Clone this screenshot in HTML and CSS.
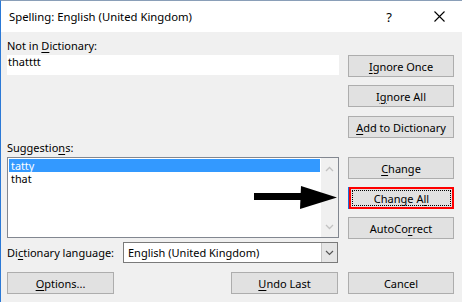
FILE: index.html
```html
<!DOCTYPE html>
<html lang="en">
<head>
    <meta charset="UTF-8">
    <title>Spelling: English (United Kingdom)</title>
    <link rel="stylesheet" href="styles.css">
</head>
<body>
    <div class="window">
        <div class="titlebar">
            <span class="title">Spelling: English (United Kingdom)</span>
            <span class="help">?</span>
            <span class="close">
                <svg width="11" height="11" viewBox="0 0 11 11"><path d="M0.5 0.5 L10.5 10.5 M10.5 0.5 L0.5 10.5" stroke="#000" stroke-width="1.1" fill="none"/></svg>
            </span>
        </div>

        <div class="dialog">
            <div class="left-col">
                <div class="label first-label">Not in <u>D</u>ictionary:</div>
                <div class="textbox">thatttt</div>

                <div class="label suggest-label">Suggestio<u>n</u>s:</div>
                <div class="listbox">
                    <div class="list-items">
                        <div class="item selected">tatty</div>
                        <div class="item">that</div>
                    </div>
                    <div class="scrollbar">
                        <svg width="9" height="6" viewBox="0 0 9 6"><path d="M1 5 L4.5 1.5 L8 5" stroke="#c2c2c2" stroke-width="1.3" fill="none"/></svg>
                        <svg width="9" height="6" viewBox="0 0 9 6"><path d="M1 1 L4.5 4.5 L8 1" stroke="#c2c2c2" stroke-width="1.3" fill="none"/></svg>
                    </div>
                </div>

                <div class="lang-row">
                    <span class="label">Di<u>c</u>tionary language:</span>
                    <div class="select">
                        <span class="select-text">English (United Kingdom)</span>
                        <span class="select-btn">
                            <svg width="9" height="6" viewBox="0 0 9 6"><path d="M1 1 L4.5 4.5 L8 1" stroke="#555" stroke-width="1.2" fill="none"/></svg>
                        </span>
                    </div>
                </div>

                <div class="bottom-row">
                    <button class="btn"><u>O</u>ptions...</button>
                    <button class="btn"><u>U</u>ndo Last</button>
                </div>
            </div>

            <div class="right-col">
                <button class="btn ignore-once"><u>I</u>gnore Once</button>
                <button class="btn ignore-all">I<u>g</u>nore All</button>
                <button class="btn add-dict"><u>A</u>dd to Dictionary</button>
                <button class="btn change"><u>C</u>hange</button>
                <button class="btn change-all">Change A<u>l</u>l</button>
                <button class="btn autocorrect">AutoCo<u>r</u>rect</button>
                <button class="btn cancel">Cancel</button>
            </div>
        </div>

        <svg class="arrow" width="85" height="26" viewBox="0 0 85 26">
            <rect x="0" y="8" width="49" height="7" fill="#000"/>
            <polygon points="47,1 83,12.5 46,24" fill="#000"/>
        </svg>
    </div>
</body>
</html>
```

FILE: styles.css
```css
* {
    margin: 0;
    padding: 0;
    box-sizing: border-box;
}

body {
    font-family: 'Noto Sans', 'Open Sans', Arial, sans-serif;
    font-size: 11px;
    color: #000;
    background-color: #f0f0f0;
}

u {
    text-decoration: underline;
    text-underline-offset: 2px;
}

.window {
    position: relative;
    width: 462px;
    height: 302px;
    border-left: 1px solid #2b79d6;
    border-top: 1px solid #8a9fb8;
    background-color: #f0f0f0;
}

.titlebar {
    height: 31px;
    background-color: #fff;
    display: flex;
    align-items: center;
    padding-left: 8px;
}

.title {
    flex: 1;
    font-size: 11.3px;
    padding-bottom: 1px;
}

.help {
    width: 12px;
    text-align: center;
    margin-right: 39px;
    font-size: 13px;
}

.close {
    display: flex;
    margin-right: 17px;
}

.dialog {
    display: grid;
    grid-template-columns: 332px 106px;
    column-gap: 9px;
    padding: 0 8px 0 6px;
    height: 270px;
}

.left-col {
    display: flex;
    flex-direction: column;
}

.label {
    line-height: 14px;
    height: 14px;
    white-space: nowrap;
}

.first-label {
    margin-top: 7px;
}

.textbox {
    margin-top: 2px;
    height: 20px;
    background-color: #fff;
    padding-left: 1px;
    line-height: 14px;
}

.suggest-label {
    margin-top: 66px;
}

.listbox {
    margin-top: 2px;
    height: 81px;
    border: 1px solid #828790;
    background-color: #fff;
    display: flex;
}

.list-items {
    flex: 1;
    padding: 1px;
    display: flex;
    flex-direction: column;
}

.item {
    height: 13px;
    line-height: 13px;
    font-size: 10.8px;
    padding-left: 2px;
    overflow: hidden;
}

.item.selected {
    background-color: #3399ff;
    color: #fff;
}

.scrollbar {
    width: 17px;
    background-color: #f0f0f0;
    display: flex;
    flex-direction: column;
    justify-content: space-between;
    align-items: center;
    padding: 8px 0 7px;
}

.lang-row {
    margin-top: 4px;
    height: 21px;
    display: flex;
    align-items: center;
}

.lang-row .label {
    width: 116px;
}

.select {
    width: 215px;
    height: 21px;
    border: 1px solid #7a7a7a;
    background-color: #fff;
    display: flex;
}

.select-text {
    flex: 1;
    padding-left: 4px;
    line-height: 19px;
}

.select-btn {
    width: 16px;
    background-color: #e5e5e5;
    border-left: 1px solid #c4c4c4;
    display: flex;
    align-items: center;
    justify-content: center;
}

.bottom-row {
    margin-top: 9px;
    display: flex;
    justify-content: space-between;
    padding-right: 1px;
}

.bottom-row .btn {
    width: 107px;
}

.btn {
    font-family: inherit;
    font-size: 11px;
    color: #000;
    height: 22px;
    background-color: #e1e1e1;
    border: 1px solid #adadad;
    line-height: 18px;
    padding-top: 1px;
    text-align: center;
}

.right-col {
    display: flex;
    flex-direction: column;
}

.right-col .btn {
    width: 106px;
}

.ignore-once {
    margin-top: 23px;
}

.ignore-all {
    margin-top: 8px;
}

.add-dict {
    margin-top: 9px;
}

.change {
    margin-top: 19px;
}

.change-all {
    position: relative;
    margin-top: 8px;
    border: 2px solid #ff0000;
    box-shadow: -1px 0 0 #1e6fd9;
}

.right-col .change-all {
    width: 105px;
    margin-left: 1px;
}

.change-all::after {
    content: '';
    position: absolute;
    top: 1px;
    left: 1px;
    right: 1px;
    bottom: 1px;
    border: 1px dotted #000;
}

.autocorrect {
    margin-top: 8px;
}

.cancel {
    margin-top: 33px;
}

.arrow {
    position: absolute;
    left: 253px;
    top: 184px;
}
```
